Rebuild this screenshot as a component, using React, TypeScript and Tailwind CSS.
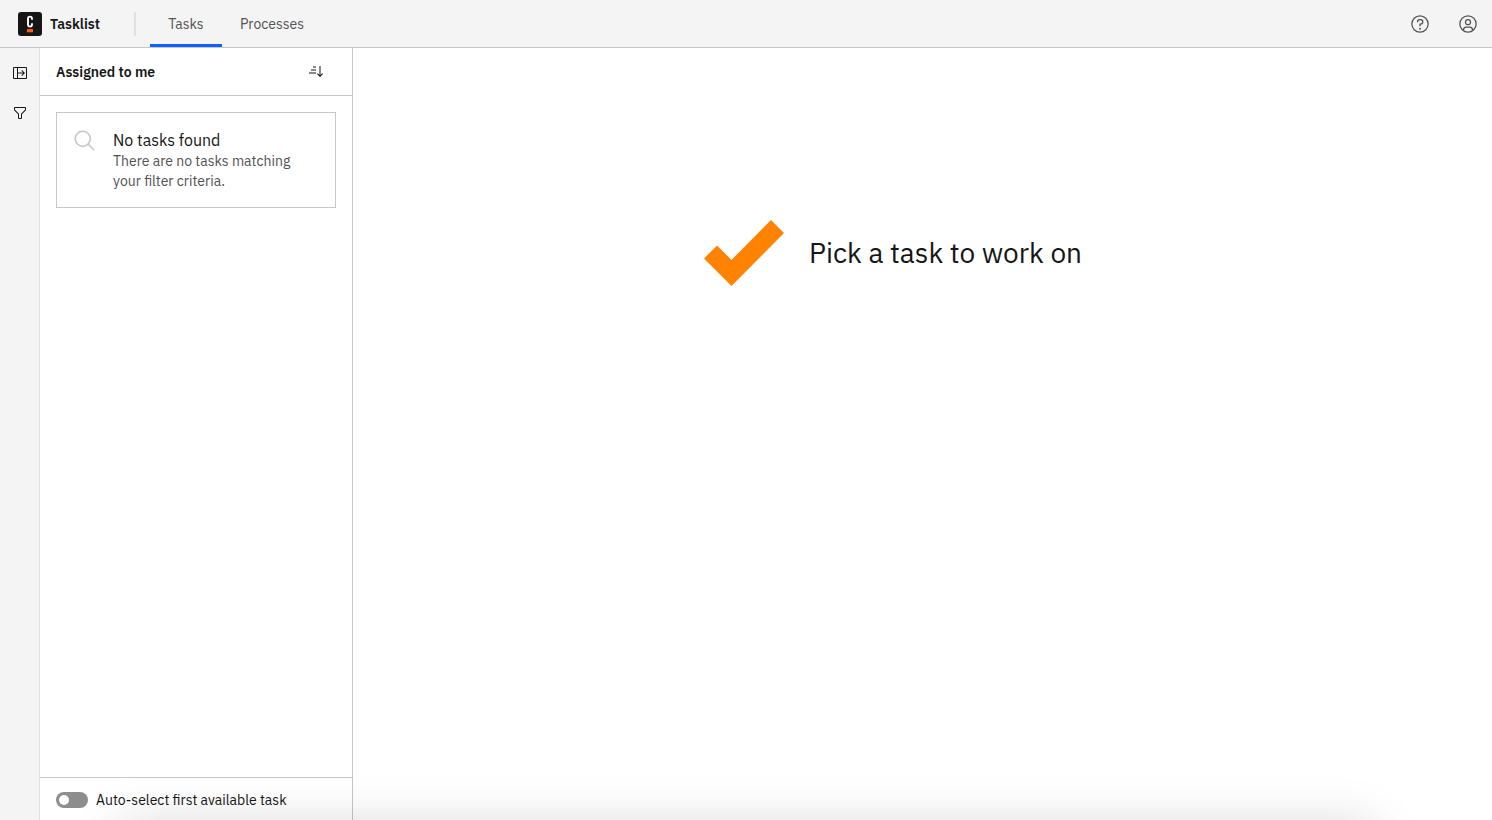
import React, { useState } from "react";

type IconProps = { children: React.ReactNode; className: string };

function Icon({ children, className }: IconProps) {
  return (
    <svg viewBox="0 0 32 32" fill="currentColor" aria-hidden="true" className={className}>
      {children}
    </svg>
  );
}

function Logo() {
  return (
    <svg viewBox="0 0 24 24" aria-hidden="true" className="size-6">
      <rect width="24" height="24" rx="3" fill="#161616" />
      <path
        d="M14 7.8V6.6a2 2 0 0 0-4 0v6a2 2 0 0 0 4 0v-1.4"
        fill="none"
        stroke="#fff"
        strokeWidth="1.9"
      />
      <rect x="9" y="17" width="6" height="3.3" fill="#fc5d0d" />
    </svg>
  );
}

function Header() {
  return (
    <header className="flex h-12 shrink-0 items-stretch border-b border-[#c6c6c6] bg-[#f4f4f4] text-sm">
      <a href="#home" className="flex items-center gap-2 pl-[18px] font-semibold text-[#161616]">
        <Logo />
        <span className="w-[84px]">Tasklist</span>
      </a>
      <div className="h-6 w-px self-center border-l-2 border-[#e0e0e0]" />
      <nav className="ml-3.5 flex text-[#525252]">
        <a
          href="#tasks"
          aria-current="page"
          className="flex w-[72px] items-center justify-center border-b-[3px] border-[#0f62fe] pt-[3px]"
        >
          Tasks
        </a>
        <a href="#processes" className="flex items-center px-[18px]">
          Processes
        </a>
      </nav>
      <div className="ml-auto flex text-[#525252]">
        <button type="button" aria-label="Help" className="grid w-12 place-items-center">
          <Icon className="size-5">
            <path d="M16 2a14 14 0 1 0 14 14A14 14 0 0 0 16 2zm0 26a12 12 0 1 1 12-12A12 12 0 0 1 16 28z" />
            <circle cx="16" cy="23.5" r="1.5" />
            <path d="M17 8h-1.5a4.49 4.49 0 0 0-4.5 4.5v.5h2v-.5a2.5 2.5 0 0 1 2.5-2.5H17a2.5 2.5 0 0 1 0 5h-2v4.5h2V17a4.5 4.5 0 0 0 0-9z" />
          </Icon>
        </button>
        <button type="button" aria-label="Account" className="grid w-12 place-items-center">
          <Icon className="size-5">
            <path d="M16 8a5 5 0 1 0 5 5 5 5 0 0 0-5-5zm0 8a3 3 0 1 1 3-3 3 3 0 0 1-3 3z" />
            <path d="M16 2a14 14 0 1 0 14 14A14 14 0 0 0 16 2zm-6 24.38V25a3 3 0 0 1 3-3h6a3 3 0 0 1 3 3v1.38a11.9 11.9 0 0 1-12 0zm13.99-1.45A5 5 0 0 0 19 20h-6a5 5 0 0 0-4.99 4.93 12 12 0 1 1 15.98 0z" />
          </Icon>
        </button>
      </div>
    </header>
  );
}

function SideRail() {
  return (
    <aside className="flex w-10 shrink-0 flex-col border-r border-[#e0e0e0] bg-[#f4f4f4] pt-[5px] text-[#161616]">
      <button type="button" aria-label="Expand filters" className="grid h-10 place-items-center">
        <Icon className="size-4">
          <path d="M28 4H4a2 2 0 0 0-2 2v20a2 2 0 0 0 2 2h24a2 2 0 0 0 2-2V6a2 2 0 0 0-2-2zM10 26H4V6h6zm18 0H12v-9h10.2l-3.6 3.6L20 22l6-6-6-6-1.4 1.4 3.6 3.6H12V6h16z" />
        </Icon>
      </button>
      <button type="button" aria-label="Filter tasks" className="grid h-10 place-items-center">
        <Icon className="size-4">
          <path d="M18 28h-4a2 2 0 0 1-2-2v-7.59L4.59 11A2 2 0 0 1 4 9.59V6a2 2 0 0 1 2-2h20a2 2 0 0 1 2 2v3.59a2 2 0 0 1-.59 1.41L20 18.41V26a2 2 0 0 1-2 2zM6 6v3.59l8 8V26h4v-8.41l8-8V6z" />
        </Icon>
      </button>
    </aside>
  );
}

function TaskPanel() {
  const [autoSelect, setAutoSelect] = useState(false);
  return (
    <section className="flex w-[313px] shrink-0 flex-col border-r border-[#c6c6c6]">
      <div className="flex h-12 shrink-0 items-center justify-between border-b border-[#c6c6c6] pr-5 pl-4">
        <h1 className="text-sm font-semibold">Assigned to me</h1>
        <button type="button" aria-label="Sort tasks" className="grid size-8 place-items-center">
          <Icon className="size-4">
            <path d="M10 5h6v2h-6zM6 11h10v2H6zM2 17h14v2H2zM23 4h2v18.2l3.6-3.6L30 20l-6 6-6-6 1.4-1.4 3.6 3.6z" />
          </Icon>
        </button>
      </div>
      <div className="grow p-4">
        <div className="flex gap-4 border border-[#c6c6c6] p-4">
          <Icon className="size-6 shrink-0 text-[#c6c6c6]">
            <path d="m29 27.59-7.55-7.56a11.02 11.02 0 1 0-1.42 1.42L27.59 29zM4 13a9 9 0 1 1 9 9 9 9 0 0 1-9-9z" />
          </Icon>
          <div>
            <h2 className="text-base leading-[22px]">No tasks found</h2>
            <p className="text-sm leading-5 text-[#525252]">
              There are no tasks matching
              <br />
              your filter criteria.
            </p>
          </div>
        </div>
      </div>
      <label className="flex h-[43px] shrink-0 items-center gap-2 border-t border-[#c6c6c6] px-4 pt-0.5 text-sm">
        <input
          type="checkbox"
          role="switch"
          checked={autoSelect}
          onChange={(event) => setAutoSelect(event.target.checked)}
          className="flex h-4 w-8 appearance-none items-center rounded-full bg-[#8d8d8d] px-[3px] before:size-2.5 before:rounded-full before:bg-white checked:justify-end checked:bg-[#24a148]"
        />
        Auto-select first available task
      </label>
    </section>
  );
}

function EmptyState() {
  return (
    <main className="flex grow items-start justify-center pt-[172px] pr-[59px]">
      <div className="flex items-center gap-[25px]">
        <svg viewBox="0 0 80 66" aria-hidden="true" className="h-[66px] w-20">
          <path d="M67 0 80 13 27.5 66 0 38.5 13 25.5 27.5 40z" fill="#ff8300" />
        </svg>
        <h2 className="text-[28px] leading-9">Pick a task to work on</h2>
      </div>
    </main>
  );
}

export default function App() {
  return (
    <div className="relative flex h-screen flex-col overflow-hidden bg-white font-['IBM_Plex_Sans','Open_Sans',sans-serif] text-[#161616]">
      <Header />
      <div className="flex min-h-0 grow">
        <SideRail />
        <TaskPanel />
        <EmptyState />
      </div>
      <div className="pointer-events-none absolute inset-x-[120px] top-full h-20 shadow-[0_6px_50px_rgba(0,0,0,0.17)]" />
    </div>
  );
}
